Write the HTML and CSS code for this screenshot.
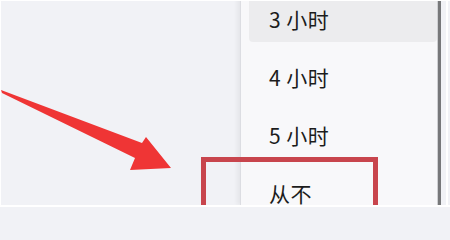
FILE: index.html
```html
<!DOCTYPE html>
<html lang="zh-CN">
<head>
<meta charset="utf-8">
<title>时间选择</title>
<link rel="stylesheet" href="styles.css">
</head>
<body>
<div class="screen">
  <div class="menu">
    <div class="item active">3 小时</div>
    <div class="item">4 小时</div>
    <div class="item">5 小时</div>
    <div class="item">从不</div>
  </div>
  <div class="edge"></div>
  <div class="rest"><div class="hairline"></div></div>

  <svg class="arrow" width="450" height="207" viewBox="0 0 450 207" aria-hidden="true">
    <polygon points="1,90 2,93 135,158 130,170 171,168 146,137 142,143" fill="#ef3535"/>
  </svg>
  <div class="highlight-box"></div>
</div>
</body>
</html>
```

FILE: styles.css
```css
html, body {
  margin: 0;
  padding: 0;
}

body {
  font-family: "Noto Sans CJK SC", "Noto Sans", sans-serif;
  background: #f1f2f6;
}

.screen {
  position: relative;
  width: 450px;
  height: 207px;
  box-sizing: border-box;
  overflow: hidden;
  background: #f1f2f6;
  border-top: 1px solid #ffffff;
  border-left: 1px solid #ffffff;
  border-bottom: 2px solid #ffffff;
  display: flex;
  align-items: stretch;
}

.menu {
  margin-left: 239px;
  width: 188px;
  padding-left: 8px;
  background: #f8f8fa;
  border-left: 1px solid #dcdde2;
  box-shadow: -3px 0 4px rgba(0, 0, 0, 0.05);
  display: flex;
  flex-direction: column;
  gap: 12px;
  margin-top: -5px;
}

.item {
  height: 46px;
  flex: none;
  display: flex;
  align-items: center;
  padding-left: 20px;
  font-size: 21px;
  letter-spacing: 0.5px;
  line-height: 1;
  color: #1c1c1c;
  border-radius: 4px;
}

.item.active {
  background: #ececee;
}

.edge {
  width: 3px;
  background: #77787a;
  border-left: 1px solid #cfd0d3;
}

.rest {
  flex: 1;
  display: flex;
  padding-left: 5px;
}

.hairline {
  width: 2px;
  background: #ffffff;
}

.arrow {
  position: absolute;
  left: -1px;
  top: -1px;
}

.highlight-box {
  position: absolute;
  left: 200px;
  top: 156px;
  width: 167px;
  height: 70px;
  border: 5px solid #c8454d;
}
```
